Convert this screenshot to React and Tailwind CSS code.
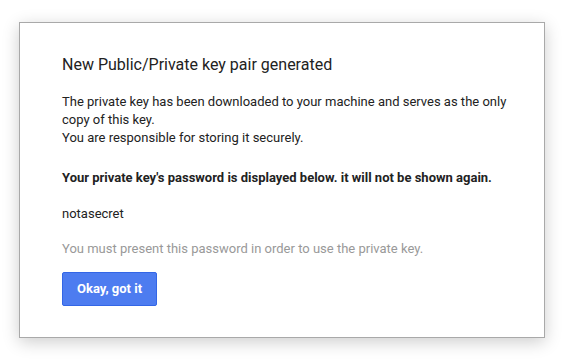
export default function App() {
  return (
    <div className="w-[569px] h-[361px] bg-white pt-[22px] pl-[19px]" style={{ fontFamily: 'Roboto, "Liberation Sans", sans-serif' }}>
      <div className="w-[526px] h-[316px] border border-[#a9a9a9] bg-white shadow-[0_4px_16px_rgba(0,0,0,0.2)] pl-[42px] pr-[30px] pt-[31px]">
        <h1 className="text-[16px] leading-[22px] text-[#222]">New Public/Private key pair generated</h1>
        <p className="mt-[17px] text-[13px] leading-[18px] text-[#222]">
          The private key has been downloaded to your machine and serves as the only copy of this key.
          <br />
          You are responsible for storing it securely.
        </p>
        <p className="mt-[22px] text-[13px] leading-[18px] font-bold text-[#222]">
          Your private key's password is displayed below. it will not be shown again.
        </p>
        <p className="mt-[18px] text-[13px] leading-[18px] text-[#222]">notasecret</p>
        <p className="mt-[17px] text-[13px] leading-[18px] text-[#999]">
          You must present this password in order to use the private key.
        </p>
        <button className="mt-[14px] h-[34px] px-[14px] rounded-[2px] border border-[#3366e6] bg-[#4d7cf0] text-white text-[13px] font-bold">
          Okay, got it
        </button>
      </div>
    </div>
  )
}
